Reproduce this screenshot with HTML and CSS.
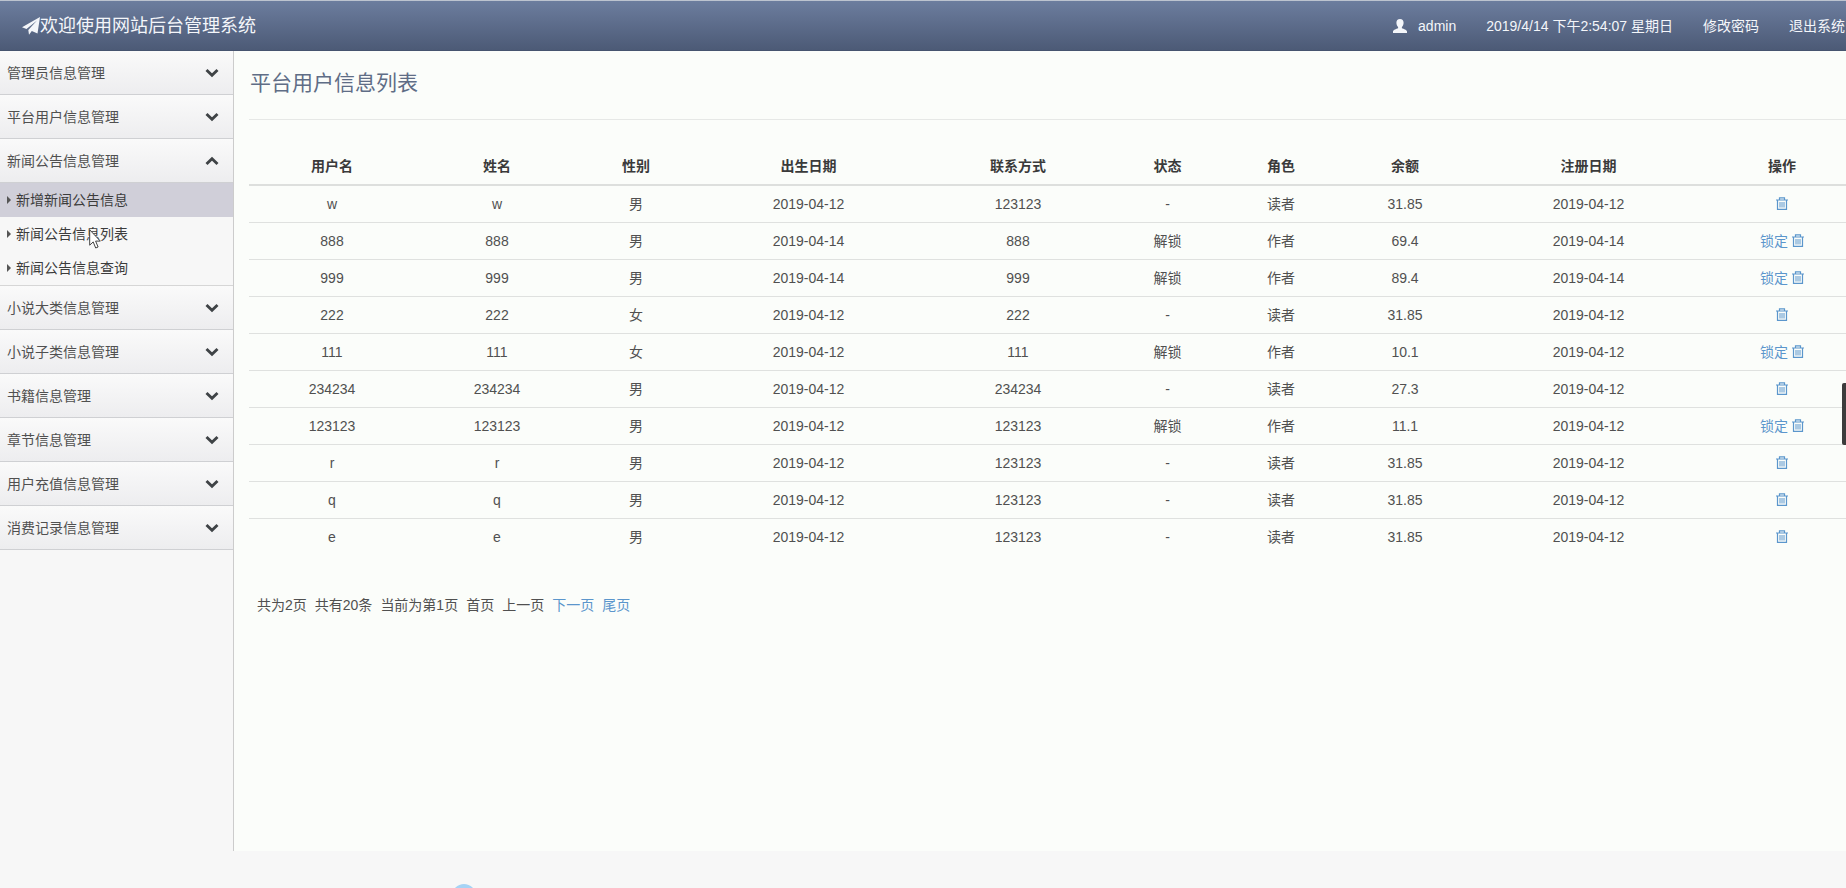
FILE: index.html
```html
<!DOCTYPE html>
<html lang="zh-CN">
<head>
<meta charset="utf-8">
<title>网站后台管理系统</title>
<link rel="stylesheet" href="styles.css">
</head>
<body>
<svg class="sprite" aria-hidden="true">
  <symbol id="trash" viewBox="0 0 12 13">
    <path d="M0 3h12M3.500 2.800V.8h5v2M1.500 3v9.300h9V3" fill="none" stroke="currentColor" stroke-width="1.200"/>
    <path d="M4 5v5.500M6 5v5.500M8 5v5.500" fill="none" stroke="currentColor" stroke-width="1"/>
  </symbol>
  <symbol id="down" viewBox="0 0 14 10">
    <path d="M1.500 2 7 7.200 12.500 2" fill="none" stroke="currentColor" stroke-width="2.900"/>
  </symbol>
  <symbol id="up" viewBox="0 0 14 10">
    <path d="M1.500 8 7 2.800 12.500 8" fill="none" stroke="currentColor" stroke-width="2.900"/>
  </symbol>
</svg>

<header class="topbar">
  <a class="brand" href="#">
    <svg class="brand-icon" viewBox="0 0 18 18" aria-hidden="true"><path d="M18 0 15.500 16.500 9.800 14.100 7 17.800 6.300 12.900 15 3.500 4.500 12 0 10.200z" fill="currentColor"/></svg>
    <span>欢迎使用网站后台管理系统</span>
  </a>
  <nav class="topnav">
    <a class="user" href="#">
      <svg class="user-icon" viewBox="0 0 14 14" aria-hidden="true"><path d="M7 0c2.400 0 3.600 1.500 3.600 3.800 0 1.900-.8 3.300-1.700 4.200v1.200c1.800.8 5.100 1.600 5.100 3.200V14H0v-1.600c0-1.600 3.300-2.400 5.100-3.200V8C4.200 7.100 3.400 5.700 3.400 3.800 3.400 1.500 4.600 0 7 0z" fill="currentColor"/></svg>
      <span>admin</span>
    </a>
    <span>2019/4/14 下午2:54:07 星期日</span>
    <a href="#">修改密码</a>
    <a href="#">退出系统</a>
  </nav>
</header>

<div class="layout">
  <aside class="sidebar">
    <button class="group" type="button">管理员信息管理<svg class="chevron"><use href="#down"/></svg></button>
    <button class="group" type="button">平台用户信息管理<svg class="chevron"><use href="#down"/></svg></button>
    <button class="group" type="button" aria-expanded="true">新闻公告信息管理<svg class="chevron"><use href="#up"/></svg></button>
    <ul class="submenu">
      <li><a class="active" href="#">新增新闻公告信息</a></li>
      <li><a href="#">新闻公告信息列表</a>
        <svg class="pointer" viewBox="0 0 12 20" aria-hidden="true"><path d="M.7.8v15.400l3.500-3.300 2.500 6.100 2.400-1-2.500-5.900h4.700z" fill="#fff" stroke="#444" stroke-width="1"/></svg>
      </li>
      <li><a href="#">新闻公告信息查询</a></li>
    </ul>
    <button class="group" type="button">小说大类信息管理<svg class="chevron"><use href="#down"/></svg></button>
    <button class="group" type="button">小说子类信息管理<svg class="chevron"><use href="#down"/></svg></button>
    <button class="group" type="button">书籍信息管理<svg class="chevron"><use href="#down"/></svg></button>
    <button class="group" type="button">章节信息管理<svg class="chevron"><use href="#down"/></svg></button>
    <button class="group" type="button">用户充值信息管理<svg class="chevron"><use href="#down"/></svg></button>
    <button class="group" type="button">消费记录信息管理<svg class="chevron"><use href="#down"/></svg></button>
  </aside>

  <main class="content">
    <h1 class="title">平台用户信息列表</h1>
    <table class="users">
      <colgroup>
        <col class="c-user"><col class="c-name"><col class="c-sex"><col class="c-birth"><col class="c-phone">
        <col class="c-state"><col class="c-role"><col class="c-money"><col class="c-date"><col class="c-action">
      </colgroup>
      <thead>
        <tr><th>用户名</th><th>姓名</th><th>性别</th><th>出生日期</th><th>联系方式</th><th>状态</th><th>角色</th><th>余额</th><th>注册日期</th><th>操作</th></tr>
      </thead>
      <tbody>
        <tr><td>w</td><td>w</td><td>男</td><td>2019-04-12</td><td>123123</td><td>-</td><td>读者</td><td>31.85</td><td>2019-04-12</td><td><a href="#" aria-label="删除"><svg class="trash"><use href="#trash"/></svg></a></td></tr>
        <tr><td>888</td><td>888</td><td>男</td><td>2019-04-14</td><td>888</td><td>解锁</td><td>作者</td><td>69.4</td><td>2019-04-14</td><td><a href="#">锁定</a> <a href="#" aria-label="删除"><svg class="trash"><use href="#trash"/></svg></a></td></tr>
        <tr><td>999</td><td>999</td><td>男</td><td>2019-04-14</td><td>999</td><td>解锁</td><td>作者</td><td>89.4</td><td>2019-04-14</td><td><a href="#">锁定</a> <a href="#" aria-label="删除"><svg class="trash"><use href="#trash"/></svg></a></td></tr>
        <tr><td>222</td><td>222</td><td>女</td><td>2019-04-12</td><td>222</td><td>-</td><td>读者</td><td>31.85</td><td>2019-04-12</td><td><a href="#" aria-label="删除"><svg class="trash"><use href="#trash"/></svg></a></td></tr>
        <tr><td>111</td><td>111</td><td>女</td><td>2019-04-12</td><td>111</td><td>解锁</td><td>作者</td><td>10.1</td><td>2019-04-12</td><td><a href="#">锁定</a> <a href="#" aria-label="删除"><svg class="trash"><use href="#trash"/></svg></a></td></tr>
        <tr><td>234234</td><td>234234</td><td>男</td><td>2019-04-12</td><td>234234</td><td>-</td><td>读者</td><td>27.3</td><td>2019-04-12</td><td><a href="#" aria-label="删除"><svg class="trash"><use href="#trash"/></svg></a></td></tr>
        <tr><td>123123</td><td>123123</td><td>男</td><td>2019-04-12</td><td>123123</td><td>解锁</td><td>作者</td><td>11.1</td><td>2019-04-12</td><td><a href="#">锁定</a> <a href="#" aria-label="删除"><svg class="trash"><use href="#trash"/></svg></a></td></tr>
        <tr><td>r</td><td>r</td><td>男</td><td>2019-04-12</td><td>123123</td><td>-</td><td>读者</td><td>31.85</td><td>2019-04-12</td><td><a href="#" aria-label="删除"><svg class="trash"><use href="#trash"/></svg></a></td></tr>
        <tr><td>q</td><td>q</td><td>男</td><td>2019-04-12</td><td>123123</td><td>-</td><td>读者</td><td>31.85</td><td>2019-04-12</td><td><a href="#" aria-label="删除"><svg class="trash"><use href="#trash"/></svg></a></td></tr>
        <tr><td>e</td><td>e</td><td>男</td><td>2019-04-12</td><td>123123</td><td>-</td><td>读者</td><td>31.85</td><td>2019-04-12</td><td><a href="#" aria-label="删除"><svg class="trash"><use href="#trash"/></svg></a></td></tr>
      </tbody>
    </table>
    <nav class="pager">
      <span>共为2页</span><span>共有20条</span><span>当前为第1页</span><span>首页</span><span>上一页</span><a href="#">下一页</a><a href="#">尾页</a>
    </nav>
  </main>
</div>

<footer class="footer"><span class="bubble"></span></footer>
<div class="edge-handle"></div>
</body>
</html>
```

FILE: styles.css
```css
* {
  box-sizing: border-box;
}

body {
  margin: 0;
  min-height: 100vh;
  display: flex;
  flex-direction: column;
  background: #f7f7f7;
  color: #505050;
  font: 14px/20px "Liberation Sans", "Noto Sans CJK SC", sans-serif;
}

a {
  color: #5b96cc;
  text-decoration: none;
}

.sprite {
  position: absolute;
  width: 0;
  height: 0;
}

.topbar {
  display: flex;
  align-items: center;
  justify-content: space-between;
  height: 51px;
  padding: 0 1px 0 22px;
  border-top: 1px solid #bcc3cf;
  border-bottom: 1px solid #46546f;
  background: linear-gradient(#6c7d9e, #4c5a76);
  color: #f4f6fa;
}

.topbar a {
  color: inherit;
}

.brand {
  display: flex;
  align-items: center;
  font-size: 18px;
}

.brand-icon {
  width: 18px;
  height: 18px;
}

.topnav {
  display: flex;
  gap: 30px;
}

.user {
  display: flex;
  align-items: center;
  gap: 11px;
}

.user-icon {
  width: 14px;
  height: 14px;
}

.layout {
  display: flex;
  flex: 1;
}

.sidebar {
  flex: none;
  width: 234px;
  border-right: 1px solid #ccc;
}

.group {
  display: flex;
  align-items: center;
  justify-content: space-between;
  width: 100%;
  height: 44px;
  padding: 0 14px 0 7px;
  border: 0;
  border-bottom: 1px solid #cfd0d3;
  background: linear-gradient(#fafafa, #ededef);
  color: #505050;
  font: inherit;
  text-align: left;
}

.chevron {
  width: 14px;
  height: 10px;
  color: #3f4346;
}

.submenu {
  margin: 0;
  padding: 0;
  border-bottom: 1px solid #d6d6d6;
  list-style: none;
}

.submenu li {
  position: relative;
}

.submenu a {
  display: flex;
  align-items: center;
  gap: 5px;
  height: 34px;
  padding-left: 7px;
  color: #3c3c3c;
}

.submenu a::before {
  content: "";
  border: 4px solid transparent;
  border-left: 4px solid #555;
  border-right: 0;
}

.submenu .active {
  background: #d0cfd9;
}

.pointer {
  position: absolute;
  left: 89px;
  top: 12px;
  width: 12px;
  height: 20px;
}

.content {
  flex: 1;
  min-width: 0;
  padding-left: 15px;
  background: #fbfdfa;
}

.title {
  margin: 0 0 28px;
  padding: 16px 0 20px 1px;
  border-bottom: 1px solid #e6e8e6;
  color: #5f6d86;
  font-size: 21px;
  font-weight: 400;
  line-height: 32px;
}

.users {
  width: 100%;
  table-layout: fixed;
  border-collapse: separate;
  border-spacing: 0;
  text-align: center;
}

.users th {
  padding: 8px 0;
  border-bottom: 2px solid #dddfdd;
  color: #3a3a3a;
}

.users td {
  padding: 8px 0;
  border-bottom: 1px solid #dfe1df;
}

.users tr > :last-child {
  padding-left: 12px;
}

.users tbody tr:last-child td {
  border-bottom: 0;
}

.c-user { width: 166px; }
.c-name { width: 164px; }
.c-sex { width: 114px; }
.c-birth { width: 231px; }
.c-phone { width: 188px; }
.c-state { width: 111px; }
.c-role { width: 116px; }
.c-money { width: 132px; }
.c-date { width: 235px; }
.c-action { width: 140px; }

.trash {
  width: 12px;
  height: 13px;
  vertical-align: -1px;
}

.pager {
  display: flex;
  gap: 8px;
  padding: 40px 8px;
}

.footer {
  position: relative;
  height: 37px;
  overflow: hidden;
}

.bubble {
  position: absolute;
  left: 452px;
  top: 33px;
  width: 24px;
  height: 24px;
  border-radius: 50%;
  background: #a6d3f5;
}

.edge-handle {
  position: fixed;
  right: 0;
  top: 383px;
  width: 4px;
  height: 62px;
  border-radius: 2px 0 0 2px;
  background: #3c3c3c;
}
```
